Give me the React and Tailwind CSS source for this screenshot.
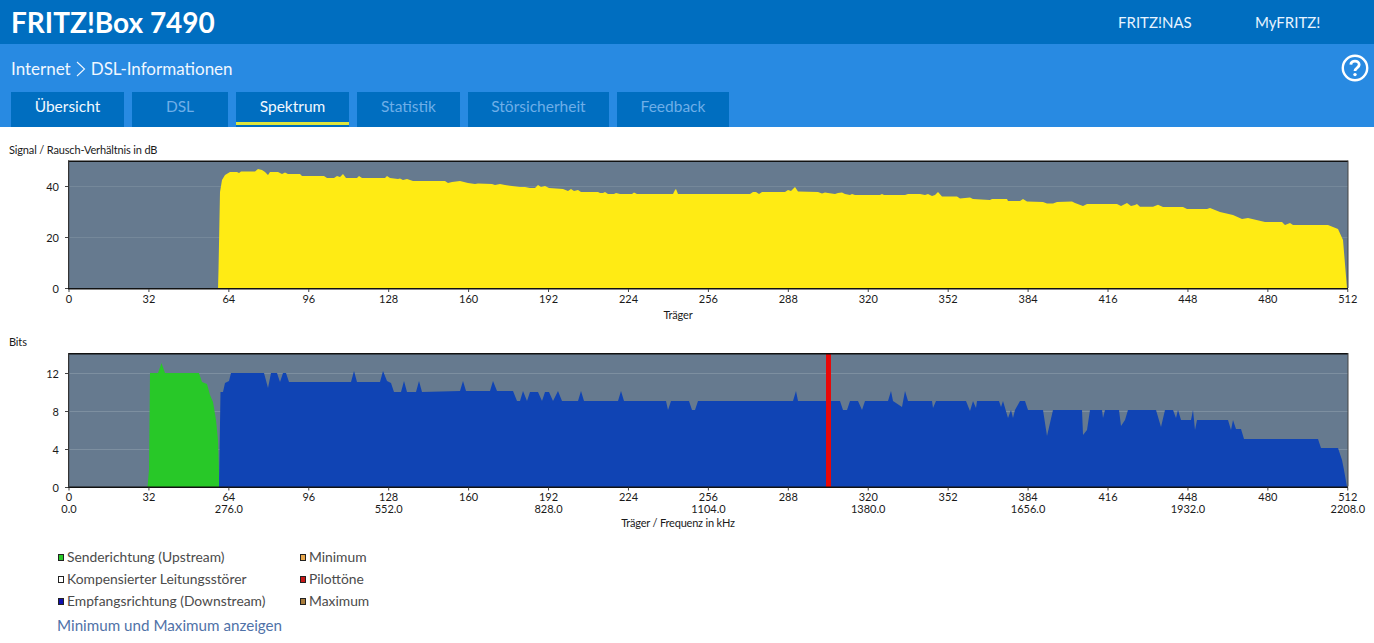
import React from 'react';

const TABS = [
  { label: 'Übersicht', w: 'w-[113px]', on: true },
  { label: 'DSL', w: 'w-[96px]' },
  { label: 'Spektrum', w: 'w-[113px]', on: true, active: true },
  { label: 'Statistik', w: 'w-[103px]' },
  { label: 'Störsicherheit', w: 'w-[141px]' },
  { label: 'Feedback', w: 'w-[112px]' },
];

// Umrisse in Seitenkoordinaten, direkt aus dem Bild abgelesen
const SNR = [
  [218, 289], [218.5, 270], [220, 192], [222, 180], [225, 175], [230, 172], [237, 172], [239, 173], [241, 171.5], [255, 171.5],
  [258, 169], [262, 170], [265, 172], [268, 175], [270, 172], [278, 172], [282, 174], [285, 172.5], [288, 174], [300, 174],
  [302, 176], [324, 176], [327, 178], [334, 178], [337, 176], [340, 177], [343, 174], [346, 178], [357, 178], [359, 176],
  [362, 178], [385, 178], [387, 176], [390, 178], [398, 179], [400, 178.5], [403, 180], [407, 179], [413, 181], [445, 181],
  [448, 183], [452, 182], [456, 181.5], [460, 181], [468, 183], [475, 184], [478, 183.5], [492, 184], [495, 185], [500, 184],
  [505, 185], [512, 186], [520, 187], [525, 187], [530, 188], [535, 188], [538, 185], [541, 187], [545, 186], [549, 188],
  [563, 189], [568, 191], [571, 189], [574, 191], [578, 190], [581, 192], [598, 192], [600, 193], [603, 193], [605, 192],
  [608, 194], [614, 194], [616, 193], [620, 194], [632, 194], [634, 192.5], [637, 194], [673, 194], [675, 190], [676, 189],
  [678, 194], [750, 194], [753, 192], [756, 192], [759, 194], [762, 192], [785, 192], [788, 190], [791, 191], [795, 187],
  [798, 191.5], [818, 192], [822, 193.5], [825, 192.5], [828, 193], [835, 194], [838, 193], [842, 192.5], [845, 194],
  [850, 195], [852, 194], [855, 195], [880, 195], [882, 194], [884, 195], [905, 195], [908, 194], [920, 194], [925, 195],
  [928, 194], [932, 196], [935, 195], [938, 192], [942, 196.5], [957, 196.5], [960, 198.5], [970, 197.5], [973, 199],
  [990, 200], [992, 199], [1007, 199], [1008, 201], [1020, 201], [1023, 199], [1027, 201.5], [1043, 202], [1047, 203.5],
  [1053, 203.5], [1057, 202], [1072, 201.5], [1075, 203], [1083, 206], [1087, 204], [1117, 204], [1121, 206], [1127, 203],
  [1131, 206], [1135, 205], [1137, 204], [1140, 206.7], [1153, 206.7], [1158, 204.7], [1163, 207], [1183, 207], [1187, 209],
  [1207, 209], [1210, 208], [1220, 212], [1233, 215], [1242, 219], [1248, 218], [1265, 222], [1282, 222], [1285, 225],
  [1290, 223], [1293, 225], [1328, 225], [1338, 229], [1343, 240], [1347, 288], [1347, 289],
];

const UP = [
  [147.5, 487], [149, 470], [150, 373], [158, 373], [161.5, 363], [165, 373], [199, 373], [202, 382], [207, 384], [210, 395],
  [213, 402], [216, 420], [218, 440], [219.5, 487],
];

const DOWN = [
  [219, 487], [220.5, 392], [223, 392], [225, 383], [229, 381], [231, 373], [264, 373], [268, 388], [271, 373], [277, 373],
  [280, 382], [283, 373], [286, 373], [289, 382], [351, 382], [354, 371], [357, 382], [380, 382], [383, 371], [387, 381],
  [391, 383], [394, 392], [401, 392], [404, 381], [407, 392], [416, 392], [419, 381], [422, 392], [460, 391],
  [463, 381], [466, 391], [490, 391], [493, 381], [497, 391], [513, 391], [517, 401], [520, 401], [523, 391], [527, 401],
  [530, 392], [538, 392], [542, 401], [545, 392], [549, 392], [553, 401], [558, 391], [562, 401], [578, 401], [581, 391],
  [584, 401], [618, 401], [621, 391], [624, 401], [666, 401], [668, 410], [671, 401], [689, 401], [692, 410], [695, 410],
  [698, 401], [793, 401], [796, 391], [798, 401], [833, 401], [840, 401], [843, 410], [847, 410], [850, 401], [858, 401],
  [862, 410], [865, 401], [888, 401], [891, 391], [893, 401], [902, 407], [905, 391], [908, 401], [932, 401], [933, 408],
  [936, 401], [966, 401], [970, 411], [973, 401], [976, 408], [977, 401], [999, 401], [1001, 407], [1003, 401], [1008, 418],
  [1011, 410], [1013, 418], [1015, 410], [1020, 401], [1025, 401], [1028, 410], [1043, 410], [1047, 436], [1053, 410],
  [1082, 410], [1083, 435], [1087, 430], [1090, 410], [1102, 410], [1103, 418], [1105, 410], [1119, 410], [1121, 426],
  [1125, 420], [1128, 410], [1156, 410], [1161, 427], [1165, 410], [1173, 410], [1176, 418], [1178, 410], [1181, 420],
  [1191, 420], [1193, 410], [1195, 430], [1197, 420], [1228, 420], [1231, 430], [1233, 420], [1236, 429], [1241, 429],
  [1244, 439], [1318, 439], [1321, 448], [1338, 448], [1342, 460], [1344, 470], [1347, 487],
];

const pts = (list) => list.map((p) => p.join(',')).join(' ');
const CARRIERS = Array.from({ length: 17 }, (_, i) => i * 32);
const xOf = (c) => 69 + c * 2.4976;

function Axes({ top, bottom, yTicks, labelY, freqY }) {
  return (
    <g fill="#1a1a1a" fontSize="11">
      <rect x="68" y={top} width="1280" height="1.5" fill="#111" />
      <rect x="68" y={bottom} width="1280" height="1.5" fill="#111" />
      <rect x="68" y={top} width="1.2" height={bottom - top} fill="#333" />
      <rect x="1347.5" y={top} width="1" height={bottom - top} fill="#444" />
      {yTicks.map(([value, y]) => (
        <g key={value}>
          <rect x="65" y={y} width="3" height="1" fill="#444" />
          <text x="59" y={y + 4.5} textAnchor="end">{value}</text>
        </g>
      ))}
      {CARRIERS.map((c) => (
        <g key={c}>
          <rect x={xOf(c) - 0.5} y={bottom + 1} width="1" height="3" fill="#444" />
          <text x={xOf(c)} y={labelY} textAnchor="middle">{c}</text>
          {freqY && c % 64 === 0 && (
            <text x={xOf(c)} y={freqY} textAnchor="middle">{(c * 4.3125).toFixed(1)}</text>
          )}
        </g>
      ))}
    </g>
  );
}

function Legend({ color, children }) {
  return (
    <div className="flex items-center h-[22px] gap-[3px]">
      <span className="w-[6px] h-[7px] border border-[#222]" style={{ backgroundColor: color }} />
      <span>{children}</span>
    </div>
  );
}

export default function App() {
  return (
    <div className="w-[1374px] h-[643px] overflow-hidden bg-white font-['Lato',sans-serif]">
      <header className="h-[44px] bg-[#006ec0] flex justify-between items-center text-white pl-[11px]">
        <h1 className="text-[28px] font-bold leading-none">FRITZ!Box 7490</h1>
        <nav className="flex text-[15px] text-[#e8f4ff]">
          <span className="w-[137px]">FRITZ!NAS</span>
          <span className="w-[119px]">MyFRITZ!</span>
        </nav>
      </header>

      <div className="h-[83px] bg-[#288ae2] px-[11px] relative flex flex-col">
        <div className="h-[48px] flex items-center text-[17px] text-[#f0f7ff] gap-[4px] pt-[2px]">
          <span>Internet</span>
          <svg width="12" height="16" viewBox="0 0 12 16" fill="none" stroke="#f0f7ff" strokeWidth="1.1">
            <path d="M2 1 L9.5 8 L2 15" />
          </svg>
          <span>DSL-Informationen</span>
        </div>
        <svg className="absolute right-[5px] top-[10px]" width="28" height="28" viewBox="0 0 28 28" fill="none">
          <circle cx="14" cy="14" r="12.2" stroke="#fff" strokeWidth="2.4" />
          <path d="M9.8 10.6 C10 5.8 18.2 6 18.2 10.8 C18.2 13.8 14 13.8 14 17" stroke="#fff" strokeWidth="2.8" />
          <circle cx="14" cy="20.6" r="1.7" fill="#fff" />
        </svg>
        <div className="flex gap-[8px] h-[35px]">
          {TABS.map((tab) => (
            <div key={tab.label} className={`${tab.w} h-[35px] bg-[#006ec0] flex justify-center pt-[3px] text-[15.5px] relative ${tab.on ? 'text-[#f2f8ff]' : 'text-[#6eaee8]'}`}>
              {tab.label}
              {tab.active && <span className="absolute left-0 right-0 bottom-[2px] h-[3px] bg-[#dfe63c]" />}
            </div>
          ))}
        </div>
      </div>

      <div className="pl-[9px] pt-[16px] text-[11px] tracking-[-0.15px] leading-[14px] text-[#1a1a1a]">Signal / Rausch-Verhältnis in dB</div>
      <svg className="block" width="1374" height="151" viewBox="0 157 1374 151">
        <rect x="68" y="161" width="1280" height="128" fill="#667a8f" />
        <rect x="68" y="186" width="1280" height="1" fill="#75889a" />
        <rect x="68" y="237" width="1280" height="1" fill="#75889a" />
        <polygon points={pts(SNR)} fill="#ffeb14" />
        <Axes top={160.5} bottom={288} yTicks={[[40, 186], [20, 237], [0, 288]]} labelY={303} />
      </svg>
      <div className="text-center pr-[18px] text-[11px] tracking-[-0.15px] leading-[14px] text-[#1a1a1a]">Träger</div>

      <div className="pl-[9px] pt-[13px] text-[11px] tracking-[-0.15px] leading-[14px] text-[#1a1a1a]">Bits</div>
      <svg className="block" width="1374" height="167" viewBox="0 349 1374 167">
        <rect x="68" y="353" width="1280" height="134" fill="#667a8f" />
        <rect x="68" y="373" width="1280" height="1" fill="#7d8fa0" />
        <rect x="68" y="411" width="1280" height="1" fill="#7d8fa0" />
        <rect x="68" y="449" width="1280" height="1" fill="#7d8fa0" />
        <polygon points={pts(UP)} fill="#28c828" />
        <polygon points={pts(DOWN)} fill="#1044b4" />
        <rect x="826" y="353" width="5" height="134" fill="#e80808" />
        <Axes top={353} bottom={486.5} yTicks={[[12, 373], [8, 411], [4, 449], [0, 487]]} labelY={501} freqY={513} />
      </svg>
      <div className="text-center pr-[18px] text-[11px] tracking-[-0.2px] leading-[14px] text-[#1a1a1a]">Träger / Frequenz in kHz</div>

      <div className="pl-[58px] pt-[16px] text-[13.85px] text-[#4b4b4b]">
        <div className="grid grid-cols-[242px_1fr] leading-[22px]">
          <Legend color="#28c828">Senderichtung (Upstream)</Legend>
          <Legend color="#e8a84c">Minimum</Legend>
          <Legend color="#ffffff">Kompensierter Leitungsstörer</Legend>
          <Legend color="#c81818">Pilottöne</Legend>
          <Legend color="#1010b0">Empfangsrichtung (Downstream)</Legend>
          <Legend color="#a87c3c">Maximum</Legend>
        </div>
        <div className="text-[15.2px] text-[#5072a8] leading-[24px] mt-[1px] -ml-[1px]">Minimum und Maximum anzeigen</div>
      </div>
    </div>
  );
}
